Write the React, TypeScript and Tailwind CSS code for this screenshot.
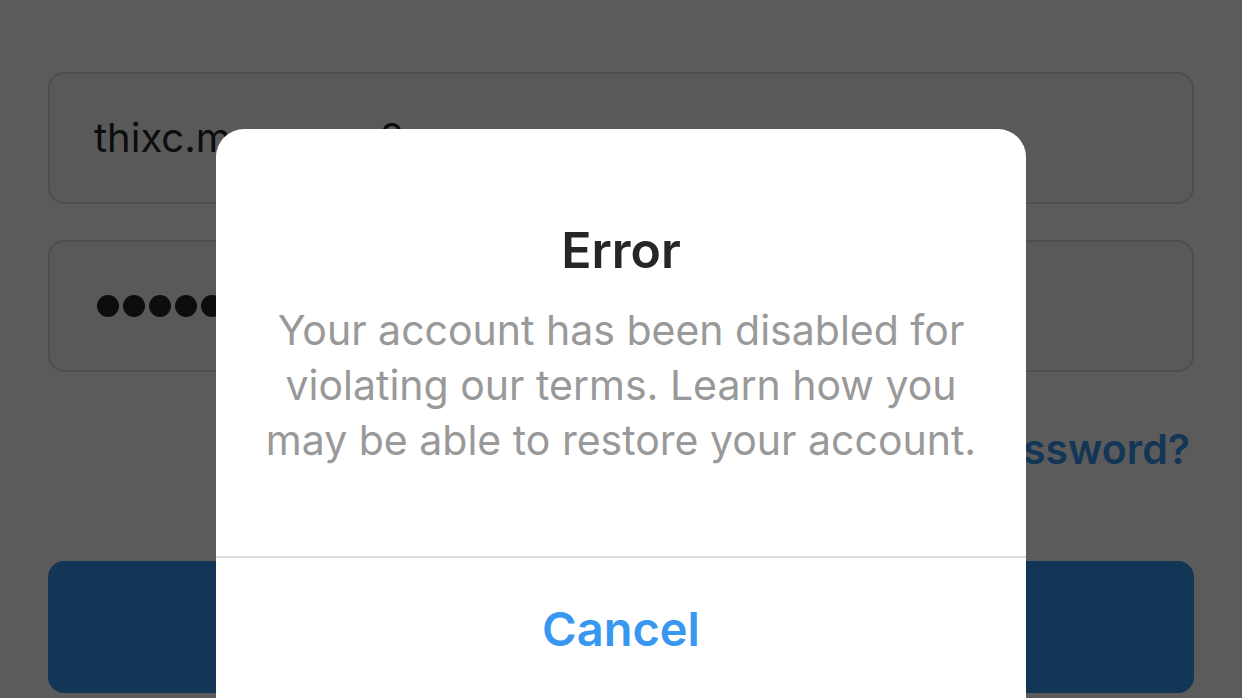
import React from "react";

const LoginForm = () => {
  return (
    <div className="px-[48px] pt-[72px]">
      <div className="h-[132px] rounded-[16px] border-2 border-[#dbdbdb] bg-[#fafafa] flex items-center px-[44px]">
        <span className="text-[40px] text-[#262626]">thixc.mamasoo2</span>
      </div>
      <div className="mt-[36px] h-[132px] rounded-[16px] border-2 border-[#dbdbdb] bg-[#fafafa] flex items-center gap-[4px] px-[47px]">
        {Array.from({ length: 9 }).map((_, i) => (
          <span key={i} className="w-[22px] h-[22px] rounded-full bg-[#262626]" />
        ))}
      </div>
      <div className="flex justify-end mt-[47px] pr-[4px]">
        <span className="text-[41px] font-semibold text-[#3897f0]">Forgot password?</span>
      </div>
      <div className="mt-[80px] h-[132px] rounded-[16px] bg-[#3897f0]" />
    </div>
  );
};

const ErrorDialog = () => {
  return (
    <div className="absolute inset-0 flex justify-center pt-[129px]">
      <div className="w-[810px] h-[640px] bg-white rounded-t-[28px] flex flex-col">
        <div className="h-[427px] flex flex-col items-center pt-[91px]">
          <h2 className="text-[50px] leading-[60px] font-semibold text-[#262626]">Error</h2>
          <p className="mt-[23px] text-[41px] leading-[55px] text-[#999999] text-center px-[30px]">
            Your account has been disabled for
            <br />
            violating our terms. Learn how you
            <br />
            may be able to restore your account.
          </p>
        </div>
        <div className="h-[2px] bg-[#dbdbdb]" />
        <div className="h-[142px] flex items-center justify-center">
          <span className="text-[47px] font-semibold text-[#3897f0]">Cancel</span>
        </div>
      </div>
    </div>
  );
};

export default function App() {
  return (
    <div
      className="relative w-full h-[698px] overflow-hidden bg-white"
      style={{ fontFamily: "Inter, 'Noto Sans', sans-serif" }}
    >
      <LoginForm />
      <div className="absolute inset-0 bg-black/[0.645]" />
      <ErrorDialog />
    </div>
  );
}
